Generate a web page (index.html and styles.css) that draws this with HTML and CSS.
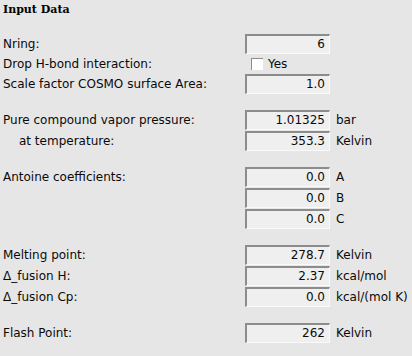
FILE: index.html
```html
<!DOCTYPE html>
<html>
<head>
<meta charset="utf-8">
<link rel="stylesheet" href="styles.css">
</head>
<body>
<div class="panel">
  <div class="title">Input Data</div>
  <div class="form">
    <div class="row"><span class="label">Nring:</span><span class="field">6</span><span class="unit"></span></div>
    <div class="row row-check"><span class="label">Drop H-bond interaction:</span><span class="check"><span class="box"></span>Yes</span><span class="unit"></span></div>
    <div class="row"><span class="label">Scale factor COSMO surface Area:</span><span class="field">1.0</span><span class="unit"></span></div>

    <div class="row gap"><span class="label">Pure compound vapor pressure:</span><span class="field">1.01325</span><span class="unit">bar</span></div>
    <div class="row"><span class="label indent">at temperature:</span><span class="field">353.3</span><span class="unit">Kelvin</span></div>

    <div class="row gap"><span class="label">Antoine coefficients:</span><span class="field">0.0</span><span class="unit">A</span></div>
    <div class="row"><span class="label"></span><span class="field">0.0</span><span class="unit">B</span></div>
    <div class="row"><span class="label"></span><span class="field">0.0</span><span class="unit">C</span></div>

    <div class="row gap"><span class="label">Melting point:</span><span class="field">278.7</span><span class="unit">Kelvin</span></div>
    <div class="row"><span class="label">Δ_fusion H:</span><span class="field">2.37</span><span class="unit">kcal/mol</span></div>
    <div class="row"><span class="label">Δ_fusion Cp:</span><span class="field">0.0</span><span class="unit">kcal/(mol K)</span></div>

    <div class="row gap"><span class="label">Flash Point:</span><span class="field">262</span><span class="unit">Kelvin</span></div>
  </div>
</div>
</body>
</html>
```
FILE: styles.css
```css
html, body {
  margin: 0;
  padding: 0;
  background: #e6e6e6;
}
.panel {
  width: 412px;
  height: 356px;
  box-sizing: border-box;
  padding: 3px 0 0 3px;
  font-family: "DejaVu Sans", sans-serif;
  font-size: 12px;
  color: #0a0a0a;
}
.title {
  font-family: "DejaVu Serif", serif;
  font-weight: bold;
  font-size: 11px;
  line-height: 13px;
  height: 13px;
  color: #000;
}
.form {
  margin-top: 18px;
  display: flex;
  flex-direction: column;
  gap: 1px;
}
.row {
  display: grid;
  grid-template-columns: 242px 85px auto;
  align-items: center;
  height: 20px;
}
.row-check {
  height: 18px;
}
.row.gap {
  margin-top: 15px;
}
.label {
  white-space: nowrap;
}
.label.indent {
  padding-left: 16px;
}
.field {
  box-sizing: border-box;
  height: 20px;
  background: #efefef;
  border-top: 2px solid #8c8c8c;
  border-left: 2px solid #8c8c8c;
  border-right: 1px solid #fafafa;
  border-bottom: 1px solid #fafafa;
  text-align: right;
  padding-right: 4px;
  line-height: 17px;
}
.unit {
  padding-left: 6px;
  white-space: nowrap;
}
.check {
  display: flex;
  align-items: center;
  padding-left: 6px;
  gap: 5px;
}
.box {
  display: inline-block;
  box-sizing: border-box;
  width: 12px;
  height: 12px;
  background: #fff;
  border-top: 1px solid #8c8c8c;
  border-left: 1px solid #8c8c8c;
}
```
